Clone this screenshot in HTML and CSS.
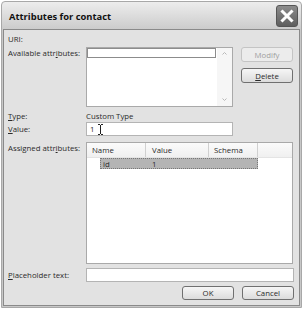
FILE: index.html
```html
<!DOCTYPE html>
<html lang="en">
<head>
    <meta charset="UTF-8">
    <title>Attributes for contact</title>
    <link rel="stylesheet" href="styles.css">
</head>
<body>
    <div class="dialog">
        <div class="titlebar">
            <span class="title">Attributes for contact</span>
            <div class="close">
                <svg width="14" height="14" viewBox="0 0 14 14">
                    <path d="M2.5 2.5 L11.5 11.5 M11.5 2.5 L2.5 11.5" stroke="#fff" stroke-width="3" stroke-linecap="square"/>
                </svg>
            </div>
        </div>
        <div class="content">
            <div class="row uri">
                <label>URI:</label>
            </div>
            <div class="row avail">
                <label>Available attr<u>i</u>butes:</label>
                <div class="listbox">
                    <div class="list-items">
                        <div class="list-edit"></div>
                    </div>
                    <div class="scrollbar">
                        <svg width="5" height="3" viewBox="0 0 5 3">
                            <path d="M0.5 2.5 L2.5 0.5 L4.5 2.5" fill="none" stroke="#b8b8b8" stroke-width="1"/>
                        </svg>
                        <svg width="5" height="3" viewBox="0 0 5 3">
                            <path d="M0.5 0.5 L2.5 2.5 L4.5 0.5" fill="none" stroke="#b8b8b8" stroke-width="1"/>
                        </svg>
                    </div>
                </div>
                <div class="side">
                    <button class="btn" disabled>Modify</button>
                    <button class="btn"><u>D</u>elete</button>
                </div>
            </div>
            <div class="row type">
                <label><u>T</u>ype:</label>
                <span>Custom Type</span>
            </div>
            <div class="row value">
                <label><u>V</u>alue:</label>
                <div class="input">
                    <span>1</span>
                    <svg class="ibeam" width="5" height="11" viewBox="0 0 5 11">
                        <path d="M0 0.5 H2 M3 0.5 H5 M2.5 1 V10 M0 10.5 H2 M3 10.5 H5" stroke="#222" stroke-width="1"/>
                    </svg>
                </div>
            </div>
            <div class="row assigned">
                <label>Assigned attr<u>i</u>butes:</label>
                <div class="grid">
                    <div class="grid-head">
                        <div class="col name">Name</div>
                        <div class="col val">Value</div>
                        <div class="col schema">Schema</div>
                    </div>
                    <div class="grid-row selected">
                        <div class="cell first">id</div>
                        <div class="cell">1</div>
                    </div>
                </div>
            </div>
            <div class="row placeholder">
                <label><u>P</u>laceholder text:</label>
                <div class="input wide"></div>
            </div>
            <div class="actions">
                <button class="btn">OK</button>
                <button class="btn">Cancel</button>
            </div>
        </div>
    </div>
</body>
</html>
```

FILE: styles.css
```css
body {
    margin: 0;
    background: #fff;
    font-family: "Open Sans", "DejaVu Sans", sans-serif;
    font-size: 7.8px;
    color: #2a2a2a;
}
.dialog {
    margin: 1px 0 0 1px;
    width: 299px;
    height: 305px;
    border: 1px solid #a8a8a8;
    border-radius: 4px 4px 0 0;
    background: linear-gradient(to bottom, #ededed, #c8c8c8 30px, #c8c8c8);
    display: flex;
    flex-direction: column;
}
.titlebar {
    height: 27px;
    display: flex;
    align-items: center;
    justify-content: space-between;
    padding: 0 3px 0 7px;
}
.title {
    font-weight: bold;
    font-size: 9.4px;
    color: #111;
    margin-top: 1px;
}
.close {
    width: 20px;
    height: 20px;
    border: 1px solid #555;
    border-radius: 3px;
    background: linear-gradient(to bottom, #8c8c8c, #5e5e5e);
    display: flex;
    align-items: center;
    justify-content: center;
}
.content {
    flex: 1;
    margin: 0 1px 1px 1px;
    border: 1px solid #8a8a8a;
    background: #e2e2e2;
    padding: 3px 5px 0 4px;
    display: flex;
    flex-direction: column;
}
.row {
    display: flex;
}
.row label {
    width: 78px;
    flex: none;
}
.uri {
    height: 12px;
    align-items: center;
}
.avail {
    margin-top: 2px;
    height: 60px;
}
.avail label {
    padding-top: 1px;
}
.listbox {
    width: 147px;
    box-sizing: border-box;
    border: 1px solid #a9a9a9;
    background: #fff;
    display: flex;
}
.list-items {
    flex: 1;
}
.list-edit {
    height: 8px;
    border: 1px solid #8c8c8c;
    margin: 0 1px 0 0;
}
.scrollbar {
    width: 15px;
    background: #f6f6f6;
    display: flex;
    flex-direction: column;
    justify-content: space-between;
    align-items: center;
    padding: 4px 0 5px;
    box-sizing: border-box;
}
.side {
    margin-left: 8px;
    display: flex;
    flex-direction: column;
    gap: 6px;
}
.btn {
    width: 52px;
    height: 15px;
    box-sizing: border-box;
    border: 1px solid #707070;
    border-radius: 3px;
    background: linear-gradient(to bottom, #f6f6f6, #dcdcdc);
    font-family: inherit;
    font-size: 7.8px;
    color: #2a2a2a;
    padding: 0;
}
.btn:disabled {
    border-color: #c4c4c4;
    background: #ececec;
    color: #a0a0a0;
}
.type {
    margin-top: 3px;
    height: 12px;
    align-items: center;
}
.value {
    height: 14px;
    align-items: center;
}
.input {
    width: 147px;
    height: 14px;
    box-sizing: border-box;
    border: 1px solid #b4b4b4;
    background: #fff;
    display: flex;
    align-items: center;
    padding-left: 3px;
    gap: 4px;
}
.input.wide {
    width: 208px;
}
.assigned {
    margin-top: 6px;
    height: 122px;
}
.assigned label {
    padding-top: 1px;
}
.grid {
    width: 207px;
    box-sizing: border-box;
    border: 1px solid #a9a9a9;
    background: #fff;
}
.grid-head {
    height: 14px;
    display: flex;
    background: linear-gradient(to bottom, #fbfbfb, #f0f0f0);
    border-bottom: 1px solid #e4e4e4;
}
.col {
    border-right: 1px solid #d0d0d0;
    display: flex;
    align-items: center;
    box-sizing: border-box;
}
.col.name {
    width: 59px;
    padding-left: 5px;
}
.col.val {
    width: 63px;
    padding-left: 6px;
}
.col.schema {
    width: 49px;
    padding-left: 5px;
}
.grid-row {
    margin-left: 13px;
    width: 158px;
    height: 11px;
    box-sizing: border-box;
    display: flex;
    align-items: center;
}
.grid-row.selected {
    background: #b4b4b4;
    border: 1px dotted #777;
}
.cell.first {
    width: 49px;
    padding-left: 2px;
}
.placeholder {
    margin-top: 4px;
    height: 14px;
    align-items: center;
}
.actions {
    margin-top: 4px;
    display: flex;
    justify-content: flex-end;
    gap: 8px;
}
.actions .btn {
    height: 14px;
}
```
